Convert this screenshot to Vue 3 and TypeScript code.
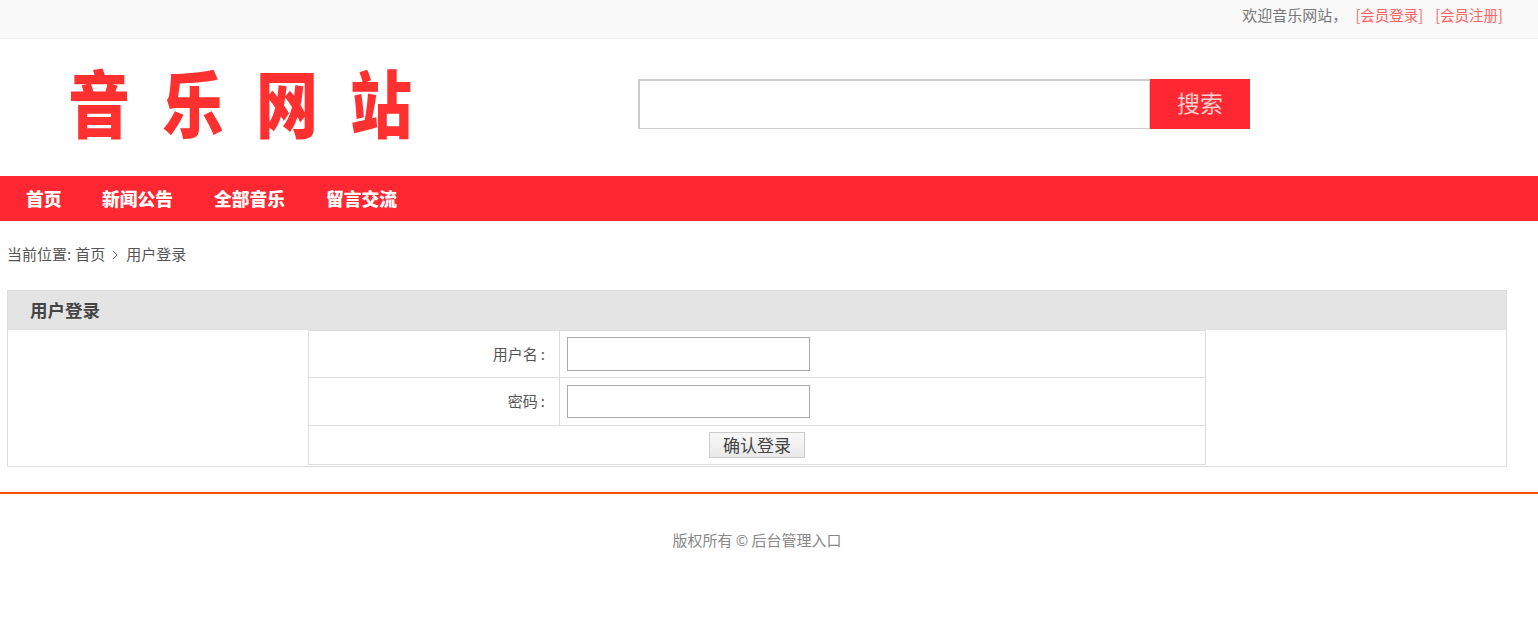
<script setup lang="ts">
const navItems: string[] = ['首页', '新闻公告', '全部音乐', '留言交流']
</script>

<template>
  <div class="page">
    <div class="topbar">
      <span class="welcome">欢迎音乐网站，</span>
      <a class="toplink login">[会员登录]</a>
      <a class="toplink">[会员注册]</a>
    </div>
    <header class="head">
      <div class="logo"><span>音</span><span>乐</span><span>网</span><span>站</span></div>
      <div class="search">
        <input class="search-input" type="text" />
        <button class="search-btn" type="button">搜索</button>
      </div>
    </header>
    <nav class="nav">
      <a v-for="item in navItems" :key="item" class="nav-item">{{ item }}</a>
    </nav>
    <div class="crumb">
      <span>当前位置:</span>
      <a class="crumb-home">首页</a>
      <svg class="chev" width="6" height="10" viewBox="0 0 6 10"><path d="M1 1l4 4-4 4" fill="none" stroke="#666" stroke-width="1" /></svg>
      <span>用户登录</span>
    </div>
    <section class="panel">
      <h2 class="panel-title">用户登录</h2>
      <table class="form-table">
        <tbody>
          <tr class="r1">
            <td class="label">用户名<span class="colon">:</span></td>
            <td class="field"><input class="text" type="text" /></td>
          </tr>
          <tr class="r2">
            <td class="label">密码<span class="colon">:</span></td>
            <td class="field"><input class="text short" type="password" /></td>
          </tr>
          <tr class="r3">
            <td class="actions" colspan="2"><button class="submit" type="button">确认登录</button></td>
          </tr>
        </tbody>
      </table>
    </section>
    <footer class="foot">版权所有 © 后台管理入口</footer>
  </div>
</template>

<style>
html, body { margin: 0; background: #fff; }
</style>

<style scoped>
.page {
  height: 639px;
  overflow: hidden;
  font-family: "Noto Sans CJK SC", "Liberation Sans", sans-serif;
  font-size: 15px;
  color: #555;
}
.topbar {
  box-sizing: border-box;
  height: 39px;
  background: #f9f9f9;
  border-bottom: 1px solid #eee;
  display: flex;
  justify-content: flex-end;
  align-items: center;
  padding: 0 35px 9px 0;
  line-height: 20px;
}
.welcome { color: #777; }
.toplink { color: #ff6464; margin-left: 12px; font-size: 14.5px; }
.login { margin-left: 8px; }
.head {
  height: 137px;
  position: relative;
  display: flex;
  align-items: flex-start;
}
.logo {
  margin: 11px 0 0 68px;
  width: 362px;
  display: flex;
  font-size: 73px;
  line-height: 100px;
  font-weight: 900;
  color: #ff3030;
}
.logo span {
  display: block;
  width: 58px;
  margin-right: 36px;
  transform: scaleX(0.85);
  transform-origin: left center;
  white-space: nowrap;
}
.search { display: flex; margin: 40px 0 0 208px; }
.search-input {
  box-sizing: border-box;
  width: 512px;
  height: 50px;
  border: 1px solid #ccc;
  border-top: 2px solid #ccc;
  border-left: 2px solid #ccc;
  outline: none;
  margin: 0;
  padding: 0 8px;
  background: #fff;
}
.search-btn {
  width: 100px;
  height: 50px;
  border: 0;
  margin: 0;
  padding: 0 0 4px;
  background: #ff2832;
  color: #ffd0d0;
  font-family: inherit;
  font-size: 23px;
}
.nav {
  height: 45px;
  background: #ff2832;
  display: flex;
  padding-left: 6px;
}
.nav-item {
  padding: 0 20px;
  line-height: 45px;
  color: #fff;
  font-size: 17.75px;
  font-weight: 900;
  width: 72px;
  white-space: nowrap;
}
.nav-item:first-child { width: 36px; }
.crumb {
  display: flex;
  align-items: center;
  height: 20px;
  margin: 23px 0 0 7px;
  line-height: 20px;
}
.crumb-home { margin-left: 4px; }
.chev { margin: 1px 8px 0 7px; }
.panel {
  box-sizing: border-box;
  width: 1500px;
  height: 177px;
  margin: 26px 0 0 7px;
  border: 1px solid #ddd;
}
.panel-title {
  margin: 0;
  height: 39px;
  line-height: 38px;
  padding-left: 22px;
  background: #e4e4e4;
  font-size: 17.5px;
  font-weight: 700;
  color: #444;
}
.form-table {
  box-sizing: border-box;
  width: 898px;
  margin-left: 300px;
  border-collapse: collapse;
  table-layout: fixed;
}
.form-table td { border: 1px solid #ddd; padding: 0; }
.r1 td { height: 46px; }
.r2 td { height: 47px; }
.r3 td { height: 38px; }
.label {
  box-sizing: border-box;
  width: 251px;
  text-align: right;
  padding: 0 14px 3px 0 !important;
}
.r1 .label { padding-bottom: 1px !important; }
.colon { margin-left: 3px; }
.field { padding-left: 7px !important; }
.text {
  display: block;
  box-sizing: border-box;
  width: 243px;
  height: 34px;
  margin: 0;
  border: 1px solid #aaa;
  background: #fff;
  outline: none;
}
.short { height: 33px; }
.actions { text-align: center; }
.submit {
  box-sizing: border-box;
  display: block;
  width: 96px;
  height: 26px;
  margin: 0 0 0 400px;
  padding: 0;
  border: 1px solid #ccc;
  background: linear-gradient(#f8f8f8, #e9e9e9);
  color: #444;
  font-family: inherit;
  font-size: 17px;
  line-height: 24px;
}
.foot {
  margin-top: 25px;
  border-top: 2px solid #ff5000;
  padding-top: 36px;
  text-align: center;
  line-height: 20px;
  color: #888;
  padding-right: 24px;
}
</style>
